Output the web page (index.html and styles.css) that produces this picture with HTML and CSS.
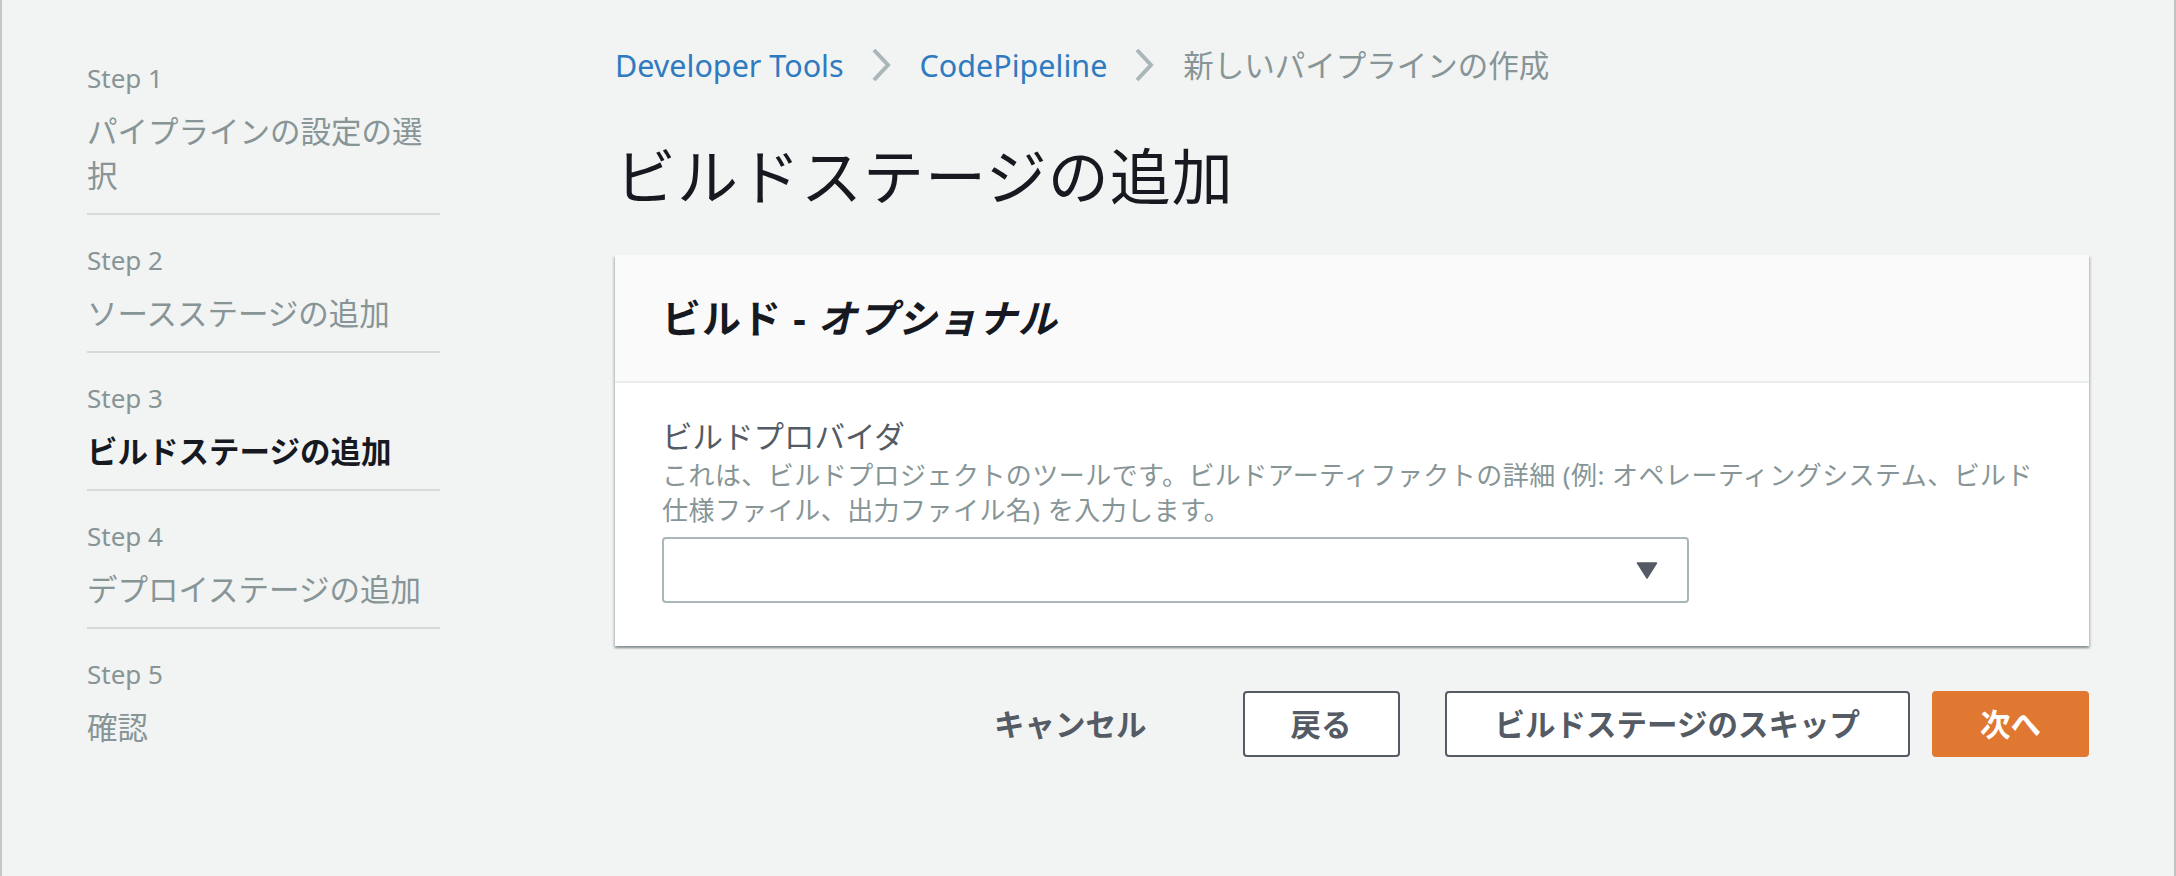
FILE: index.html
```html
<!DOCTYPE html>
<html lang="ja">
<head>
<meta charset="utf-8">
<title>ビルドステージの追加</title>
<link rel="stylesheet" href="styles.css">
</head>
<body>
<div class="frame">
  <nav class="wizard-nav">
    <ul class="steps">
      <li class="step">
        <div class="step-num">Step 1</div>
        <div class="step-title">パイプラインの設定の選択</div>
      </li>
      <li class="step">
        <div class="step-num">Step 2</div>
        <div class="step-title">ソースステージの追加</div>
      </li>
      <li class="step">
        <div class="step-num">Step 3</div>
        <div class="step-title active">ビルドステージの追加</div>
      </li>
      <li class="step">
        <div class="step-num">Step 4</div>
        <div class="step-title">デプロイステージの追加</div>
      </li>
      <li class="step last">
        <div class="step-num">Step 5</div>
        <div class="step-title">確認</div>
      </li>
    </ul>
  </nav>

  <main class="main">
    <div class="breadcrumbs">
      <a class="crumb-link">Developer Tools</a>
      <svg class="chev" width="20" height="34" viewBox="0 0 20 34"><path d="M3 2 L17 17 L3 32" fill="none" stroke="#aab7b8" stroke-width="4"/></svg>
      <a class="crumb-link">CodePipeline</a>
      <svg class="chev" width="20" height="34" viewBox="0 0 20 34"><path d="M3 2 L17 17 L3 32" fill="none" stroke="#aab7b8" stroke-width="4"/></svg>
      <span class="crumb-current">新しいパイプラインの作成</span>
    </div>

    <h1 class="page-title">ビルドステージの追加</h1>

    <section class="panel">
      <div class="panel-header">
        <h2 class="panel-title">ビルド - <i>オプショナル</i></h2>
      </div>
      <div class="panel-body">
        <div class="field-label">ビルドプロバイダ</div>
        <div class="field-desc">
          <span class="desc-line">これは、ビルドプロジェクトのツールです。ビルドアーティファクトの詳細 (例: オペレーティングシステム、ビルド</span>
          <span class="desc-line">仕様ファイル、出力ファイル名) を入力します。</span>
        </div>
        <div class="select">
          <svg class="caret" width="22" height="17" viewBox="0 0 22 17"><path d="M1.5 1 H20.5 L11 16 Z" fill="#545b64" stroke="#545b64" stroke-width="1.5" stroke-linejoin="round"/></svg>
        </div>
      </div>
    </section>

    <div class="actions">
      <button class="btn btn-link">キャンセル</button>
      <button class="btn btn-back">戻る</button>
      <button class="btn btn-skip">ビルドステージのスキップ</button>
      <button class="btn btn-primary">次へ</button>
    </div>
  </main>
</div>
</body>
</html>
```

FILE: styles.css
```css
* {
  box-sizing: border-box;
}

html, body {
  margin: 0;
  padding: 0;
}

body {
  background: #f2f3f3;
  font-family: "Noto Sans", "Noto Sans CJK JP", sans-serif;
  color: #16191f;
  width: 2176px;
  height: 876px;
  overflow: hidden;
}

.frame {
  display: flex;
  align-items: flex-start;
  height: 876px;
  border-left: 2px solid #c3c9c9;
  border-right: 2px solid #bcc3c3;
  padding-left: 85px;
}

/* Sidebar */
.wizard-nav {
  width: 353px;
  flex: none;
  padding-top: 33px;
}

.steps {
  list-style: none;
  margin: 0;
  padding: 0;
}

.step {
  padding: 28px 0 16px;
  border-bottom: 2px solid #d5dbdb;
}

.step.last {
  border-bottom: none;
}

.step-num {
  font-size: 26px;
  line-height: 35px;
  color: #879596;
}

.step-title {
  margin-top: 13px;
  font-size: 30.5px;
  line-height: 44px;
  color: #879596;
}

.step-title.active {
  color: #16191f;
  font-weight: 700;
}

/* Main */
.main {
  width: 1474px;
  flex: none;
  margin-left: 175px;
  padding-top: 41px;
}

.breadcrumbs {
  display: flex;
  align-items: center;
  height: 48px;
  font-size: 30.5px;
  line-height: 48px;
}

.crumb-link {
  color: #2e7bbf;
  text-decoration: none;
}

.chev {
  margin: 0 29px 0 27px;
  flex: none;
}

.crumb-current {
  color: #879596;
}

.page-title {
  margin: 48px 0 0;
  font-size: 61px;
  line-height: 80px;
  font-weight: 400;
  letter-spacing: 1px;
  color: #16191f;
}

.panel {
  margin-top: 38px;
  background: #ffffff;
  box-shadow: 0 2px 2px 0 rgba(0, 28, 36, 0.3),
              2px 2px 2px 0 rgba(0, 28, 36, 0.12),
              -2px 2px 2px 0 rgba(0, 28, 36, 0.12);
}

.panel-header {
  background: #fafafa;
  padding: 38px 47px;
  border-bottom: 2px solid #eaeded;
}

.panel-title {
  margin: 0;
  font-size: 39px;
  line-height: 50px;
  font-weight: 700;
  letter-spacing: 1px;
  color: #16191f;
}

.panel-title i {
  font-style: italic;
}

.panel-body {
  padding: 31px 47px 43px;
}

.field-label {
  font-size: 30.5px;
  line-height: 44px;
  color: #545b64;
}

.field-desc {
  font-size: 26px;
  line-height: 35px;
  letter-spacing: 0.45px;
  color: #879596;
}

.desc-line {
  display: block;
  white-space: nowrap;
}

.select {
  margin-top: 9px;
  width: 1027px;
  height: 66px;
  border: 2px solid #aab7b8;
  border-radius: 4px;
  background: #ffffff;
  display: flex;
  align-items: center;
  justify-content: flex-end;
  padding-right: 29px;
}

.caret {
  display: block;
}

/* Actions */
.actions {
  margin-top: 45px;
  display: flex;
  justify-content: flex-end;
  align-items: center;
}

.btn {
  font-family: "Noto Sans", "Noto Sans CJK JP", sans-serif;
  font-size: 30.5px;
  line-height: 44px;
  font-weight: 700;
  height: 66px;
  padding: 9px 46px;
  border: 2px solid #545b64;
  border-radius: 4px;
  background: #ffffff;
  color: #545b64;
  cursor: pointer;
}

.btn-link {
  border-color: transparent;
  background: transparent;
}

.btn-back {
  margin-left: 48px;
}

.btn-skip {
  margin-left: 45px;
  padding: 9px 48px;
}

.btn-primary {
  margin-left: 22px;
  background: #e07832;
  border-color: #e07832;
  color: #ffffff;
}
```
